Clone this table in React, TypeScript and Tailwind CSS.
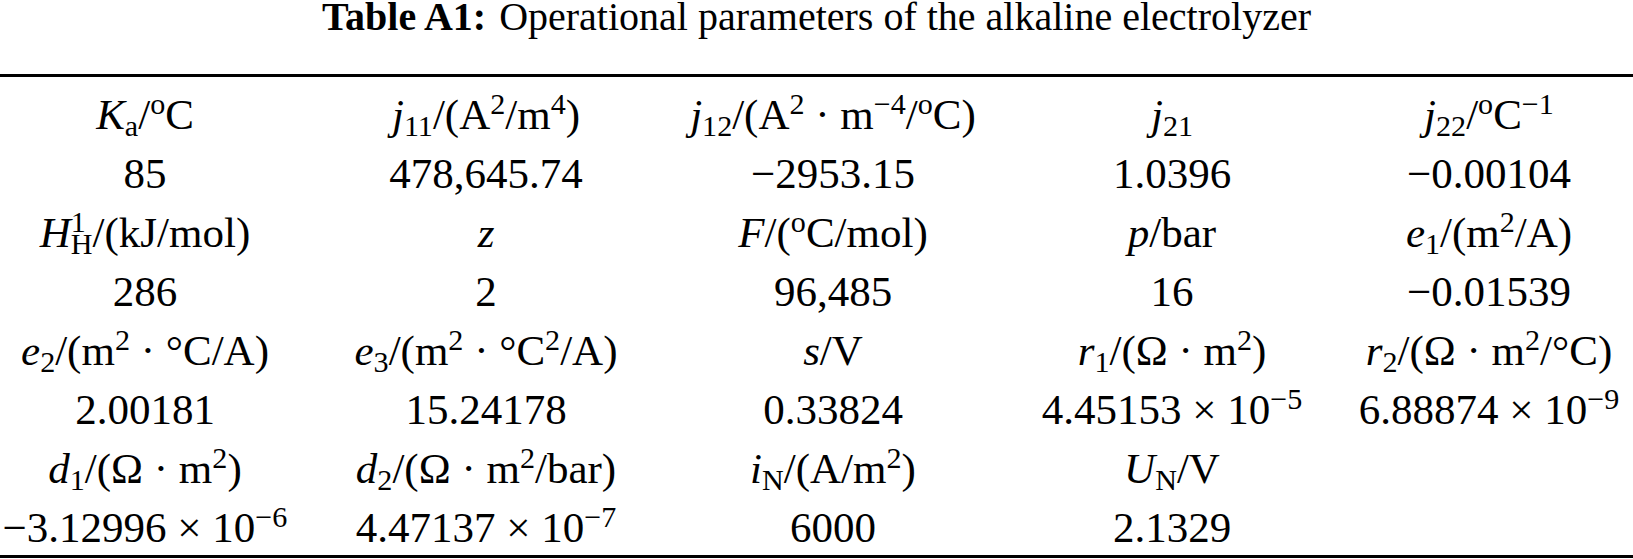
import type { ReactNode } from "react";

function Sub({ children }: { children: ReactNode }) {
  return <span className="align-[-0.22em] text-[0.7em] leading-none not-italic">{children}</span>;
}

function Sup({ children }: { children: ReactNode }) {
  return <span className="align-[0.5em] text-[0.7em] leading-none not-italic">{children}</span>;
}

// stacked sub + sup, e.g. H_H^1
function SubSup({ sub, sup }: { sub: string; sup: string }) {
  return (
    <span className="inline-flex flex-col align-[0.5em] text-[0.7em] leading-[0.72em] not-italic">
      <span>{sup}</span>
      <span>{sub}</span>
    </span>
  );
}

const rows: ReactNode[][] = [
  [
    <><i>K</i><Sub>a</Sub>/<Sup>o</Sup>C</>,
    <><i>j</i><Sub>11</Sub>/(A<Sup>2</Sup>/m<Sup>4</Sup>)</>,
    <><i>j</i><Sub>12</Sub>/(A<Sup>2</Sup> · m<Sup>−4</Sup>/<Sup>o</Sup>C)</>,
    <><i>j</i><Sub>21</Sub></>,
    <><i>j</i><Sub>22</Sub>/<Sup>o</Sup>C<Sup>−1</Sup></>,
  ],
  ["85", "478,645.74", "−2953.15", "1.0396", "−0.00104"],
  [
    <><i>H</i><SubSup sub="H" sup="1" />/(kJ/mol)</>,
    <i>z</i>,
    <><i>F</i>/(<Sup>o</Sup>C/mol)</>,
    <><i>p</i>/bar</>,
    <><i>e</i><Sub>1</Sub>/(m<Sup>2</Sup>/A)</>,
  ],
  ["286", "2", "96,485", "16", "−0.01539"],
  [
    <><i>e</i><Sub>2</Sub>/(m<Sup>2</Sup> · °C/A)</>,
    <><i>e</i><Sub>3</Sub>/(m<Sup>2</Sup> · °C<Sup>2</Sup>/A)</>,
    <><i>s</i>/V</>,
    <><i>r</i><Sub>1</Sub>/(Ω · m<Sup>2</Sup>)</>,
    <><i>r</i><Sub>2</Sub>/(Ω · m<Sup>2</Sup>/°C)</>,
  ],
  [
    "2.00181",
    "15.24178",
    "0.33824",
    <>4.45153 × 10<Sup>−5</Sup></>,
    <>6.88874 × 10<Sup>−9</Sup></>,
  ],
  [
    <><i>d</i><Sub>1</Sub>/(Ω · m<Sup>2</Sup>)</>,
    <><i>d</i><Sub>2</Sub>/(Ω · m<Sup>2</Sup>/bar)</>,
    <><i>i</i><Sub>N</Sub>/(A/m<Sup>2</Sup>)</>,
    <><i>U</i><Sub>N</Sub>/V</>,
    "",
  ],
  [
    <>−3.12996 × 10<Sup>−6</Sup></>,
    <>4.47137 × 10<Sup>−7</Sup></>,
    "6000",
    "2.1329",
    "",
  ],
];

export default function App() {
  return (
    <div className="h-[559px] w-[1633px] overflow-hidden bg-white text-black" style={{ fontFamily: '"Liberation Serif", "Times New Roman", serif' }}>
      <div className="flex h-[74px] justify-center text-[40px] leading-[34px]">
        <span className="font-bold">Table A1:</span>
        <span className="ml-[13px]">Operational parameters of the alkaline electrolyzer</span>
      </div>
      <div className="h-[3px] bg-black" />
      <div className="pt-[8px]">
        {rows.map((row, r) => (
          <div
            key={r}
            className={`grid grid-cols-[290px_392px_302px_376px_258px] text-[43px] leading-[59px] ${r === rows.length - 1 ? "h-[57px]" : "h-[59px]"}`}
          >
            {row.map((cell, c) => (
              <div key={c} className="flex justify-center whitespace-nowrap">
                <span>{cell}</span>
              </div>
            ))}
          </div>
        ))}
      </div>
      <div className="h-[3px] bg-black" />
    </div>
  );
}
